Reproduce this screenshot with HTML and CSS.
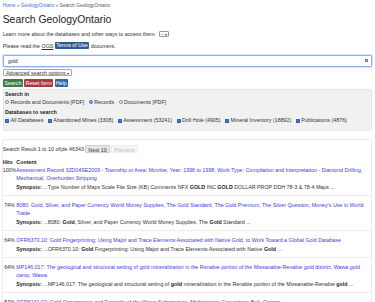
FILE: index.html
```html
<!DOCTYPE html>
<html lang="en">
<head>
    <meta charset="UTF-8">
    <title>Search GeologyOntario</title>
    <link rel="stylesheet" href="styles.css">
</head>
<body>
<div class="page">
    <nav class="crumbs">
        <a href="#">Home</a> <span class="sep">»</span> <a href="#">GeologyOntario</a> <span class="sep">»</span> Search GeologyOntario
    </nav>
    <h1>Search GeologyOntario</h1>
    <p class="intro">Learn more about the databases and other ways to access them. <span class="mini">-- <i>▾</i></span></p>
    <p class="intro second">Please read the <abbr>OGS</abbr> <a href="#" class="tag">Terms of Use</a> document.</p>

    <form class="search">
        <div class="query">
            <input type="text" value="gold">
            <span class="qicon"></span>
        </div>
        <span class="adv">Advanced search options <i>▾</i></span>
        <div class="actions">
            <button type="button" class="btn green">Search</button>
            <button type="button" class="btn red">Reset form</button>
            <button type="button" class="btn blue">Help</button>
        </div>
        <div class="panel">
            <div class="label">Search in</div>
            <div class="opts">
                <label><input type="radio" name="kind">Records and Documents [PDF]</label>
                <label><input type="radio" name="kind" checked>Records</label>
                <label><input type="radio" name="kind">Documents [PDF]</label>
            </div>
            <div class="label gap">Databases to search</div>
            <div class="opts last">
                <label><input type="checkbox" checked>All Databases</label>
                <label><input type="checkbox" checked>Abandoned Mines (3308)</label>
                <label><input type="checkbox" checked>Assessment (53241)</label>
                <label><input type="checkbox" checked>Drill Hole (4905)</label>
                <label><input type="checkbox" checked>Mineral Inventory (18892)</label>
                <label><input type="checkbox" checked>Publications (4876)</label>
            </div>
        </div>
    </form>

    <div class="results">
        <div class="pager">
            Search Result 1 to 10 of(de 46343
            <button type="button" class="pg">Next 10</button>
            <button type="button" class="pg off">Previous</button>
        </div>
        <div class="hit head"><b>Hits</b><b>Content</b></div>
        <div class="hit first">
            <span class="pct">100%</span>
            <div>
                <a href="#">Assessment Record 32D04SE2009 - Township or Area: Mcvittie; Year: 1996 to 1998; Work Type: Compilation and Interpretation - Diamond Drilling, Mechanical, Overburden Stripping</a>
                <div class="syn"><b>Synopsis:</b> ...Type Number of Maps Scale File Size (KB) Comments NFX <b>GOLD</b> INC <b>GOLD</b> DOLLAR PROP DDH 78-3 &amp; 78-4 Maps ...</div>
            </div>
        </div>
        <div class="hit">
            <span class="pct">74%</span>
            <div>
                <a href="#">8080: Gold, Silver, and Paper Currency World Money Supplies, The Gold Standard, The Gold Premium, The Silver Question, Money’s Use in World Trade</a>
                <div class="syn"><b>Synopsis:</b> ...8080: <b>Gold</b>, Silver, and Paper Currency World Money Supplies, The <b>Gold</b> Standard ...</div>
            </div>
        </div>
        <div class="hit">
            <span class="pct">64%</span>
            <div>
                <a href="#">OFR6370.10: Gold Fingerprinting: Using Major and Trace Elements Associated with Native Gold, to Work Toward a Global Gold Database</a>
                <div class="syn"><b>Synopsis:</b> ...OFR6370.10: <b>Gold</b> Fingerprinting: Using Major and Trace Elements Associated with Native <b>Gold</b> ...</div>
            </div>
        </div>
        <div class="hit">
            <span class="pct">64%</span>
            <div>
                <a href="#">MP146.017: The geological and structural setting of gold mineralization in the Renabie portion of the Missanabie-Renabie gold district, Wawa gold camp, Wawa</a>
                <div class="syn"><b>Synopsis:</b> ...MP146.017: The geological and structural setting of <b>gold</b> mineralization in the Renabie portion of the Missanabie-Renabie <b>gold</b> ...</div>
            </div>
        </div>
        <div class="hit">
            <span class="pct">57%</span>
            <div>
                <a href="#">OFR6241.02: Gold Occurrences and Deposits of the Wawa Subprovince, Michipicoten Greenstone Belt, Ontario</a>
                <div class="syn"><b>Synopsis:</b> ...OFR6241.02: <b>Gold</b> Occurrences and Deposits ...</div>
            </div>
        </div>
    </div>
</div>
</body>
</html>
```

FILE: styles.css
```css
*{
    margin:0;
    padding:0;
    box-sizing:border-box;
}
body{
    background:#fff;
    color:#333;
    font-family:"Liberation Sans", Arial, sans-serif;
    font-size:5.33px;
}
a{
    text-decoration:none;
}
.page{
    padding:2px 3px 0 2.7px;
}

/* header */
.crumbs{
    font-size:4.8px;
    line-height:8px;
    color:#555;
}
.crumbs a{
    color:#3170dc;
}
.crumbs .sep{
    color:#777;
}
h1{
    font-size:10.4px;
    font-weight:500;
    line-height:12px;
    color:#222;
    margin:4px 0 3.7px;
}
.intro{
    line-height:8px;
}
.intro.second{
    margin-top:4px;
}
.mini{
    display:inline-block;
    vertical-align:middle;
    height:6px;
    line-height:5px;
    padding:0 1px 0 1.5px;
    margin-left:1px;
    border:0.5px solid #999;
    border-radius:1px;
    font-size:4.5px;
}
.mini i, .adv i{
    font-style:normal;
    font-size:3.5px;
}
abbr{
    text-decoration:underline;
}
.tag{
    display:inline-block;
    vertical-align:middle;
    line-height:7.4px;
    padding:0 1.5px;
    margin-top:-1px;
    background:#2c5d92;
    color:#fff;
    border-radius:1px;
}

/* search form */
.query{
    position:relative;
    margin-top:5px;
}
.query input{
    display:block;
    width:100%;
    height:12.6px;
    padding:0 4px;
    font:inherit;
    color:#333;
    border:0.7px solid #8fb0e6;
    border-radius:1.5px;
    box-shadow:0 0 0 1px #d5e2f7;
    outline:none;
}
.qicon{
    position:absolute;
    right:4.5px;
    top:4.8px;
    width:3px;
    height:3px;
    background:#9fb1d8;
    border:0.6px solid #6d82b0;
}
.adv{
    display:inline-block;
    margin-top:1.4px;
    height:7.6px;
    line-height:6.8px;
    padding:0 1.5px 0 1.6px;
    margin-left:0.6px;
    border:0.5px solid #aaa;
    border-radius:1px;
    color:#333;
}
.actions{
    display:flex;
    gap:1.4px;
    margin-top:3px;
    padding-left:0.6px;
}
.btn{
    height:7.7px;
    padding:0 1.2px;
    font:inherit;
    color:#fff;
    border:none;
    border-radius:1px;
}
.btn.green{ background:#3d7a47; }
.btn.red{ background:#a8393e; padding:0 1.6px; }
.btn.blue{ background:#2f68a8; }

.panel{
    margin-top:1.7px;
    padding:1px 2px 5.5px 1.3px;
    background:#f1f1f1;
    border:1px solid #e6e6e6;
    border-radius:2px;
}
.label{
    font-weight:bold;
    line-height:7px;
    color:#222;
}
.label.gap{
    margin-top:3.4px;
}
.opts{
    display:flex;
    gap:4.5px;
    margin-top:1.1px;
    line-height:7px;
}
.opts.last{
    margin-top:1.3px;
}
.opts label{
    display:flex;
    align-items:center;
}
.opts input{
    appearance:none;
    width:4px;
    height:4px;
    margin-right:1.5px;
    background:#fff;
    border:0.5px solid #888;
}
.opts input[type=radio]{
    border-radius:50%;
}
.opts input[type=radio]:checked{
    background:#3a78de;
    border-color:#3a78de;
    box-shadow:inset 0 0 0 0.8px #b9d0f5;
}
.opts input[type=checkbox]:checked{
    background:#3a78de;
    border-color:#2d62bd;
    border-radius:0.6px;
    box-shadow:inset 0 0 0 1.1px #3a78de, inset 0 0 0 2px #dbe7fb;
}

/* results */
.results{
    margin:8px 0 0 -1px;
    padding-top:5px;
    border:1px solid #ececec;
    border-radius:2px;
}
.pager{
    display:flex;
    align-items:center;
    gap:1.5px;
    line-height:8.3px;
}
.pg{
    height:8.3px;
    padding:0 2px;
    font:inherit;
    color:#333;
    background:#e6e6e6;
    border:0.5px solid #cfcfcf;
    border-radius:1px;
}
.pg.off{
    color:#bcbcbc;
    background:#f6f6f6;
    border-color:#eee;
}
.hit{
    display:grid;
    grid-template-columns:13.6px 1fr;
    padding:5px 0 4.3px;
    border-top:1px solid #ededed;
    line-height:8.3px;
}
.hit.head{
    margin-top:4.7px;
    padding:0;
    border:none;
    line-height:8px;
    color:#222;
}
.hit.first{
    padding-top:0;
    border:none;
}
.pct{
    text-align:center;
    white-space:nowrap;
}
.hit a{
    color:#4242de;
}
.syn{
    color:#333;
}
.syn b{
    color:#222;
}
```
